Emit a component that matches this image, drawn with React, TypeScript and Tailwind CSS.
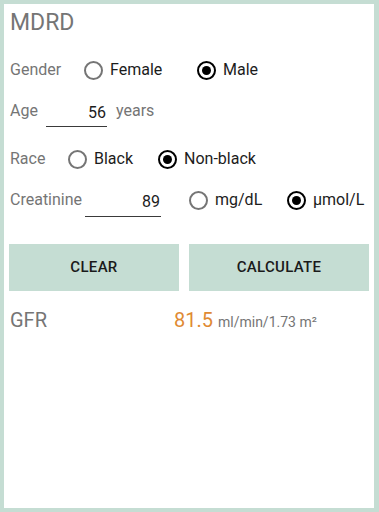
import React, { useState } from 'react';

const font = { fontFamily: 'Roboto, "Noto Sans", sans-serif' };

type RadioProps = {
  label: string;
  checked: boolean;
  onClick: () => void;
  className?: string;
};

// Android style radio button
const Radio: React.FC<RadioProps> = ({ label, checked, onClick, className = '' }) => (
  <button onClick={onClick} className={`flex items-center gap-[7px] ${className}`}>
    <span
      className={`w-[19px] h-[19px] rounded-full border-2 flex items-center justify-center ${
        checked ? 'border-black' : 'border-[#757575]'
      }`}
    >
      {checked && <span className="w-[9px] h-[9px] rounded-full bg-black" />}
    </span>
    <span className="text-[16px] text-[#1c1c1c]">{label}</span>
  </button>
);

const App: React.FC = () => {
  const [gender, setGender] = useState('male');
  const [race, setRace] = useState('nonblack');
  const [unit, setUnit] = useState('umol');
  const [age, setAge] = useState('56');
  const [creat, setCreat] = useState('89');

  return (
    <div className="w-[379px] h-[512px] bg-[#c5ddd3] pt-[4px] pl-[4px] pr-[5px] pb-[4px]" style={font}>
      <div className="bg-white h-full pl-[6px] pr-[5px]">
        {/* Title */}
        <div className="h-[38px] flex items-center text-[23px] text-[#757575]">MDRD</div>

        {/* Gender */}
        <div className="h-[40px] mt-[8px] flex items-center">
          <div className="w-[74px] text-[16px] text-[#757575]">Gender</div>
          <Radio label="Female" checked={gender === 'female'} onClick={() => setGender('female')} className="w-[113px]" />
          <Radio label="Male" checked={gender === 'male'} onClick={() => setGender('male')} />
        </div>

        {/* Age */}
        <div className="h-[40px] mt-[1px] flex items-center">
          <div className="w-[36px] text-[16px] text-[#757575]">Age</div>
          <input
            value={age}
            onChange={(e) => setAge(e.target.value)}
            className="w-[61px] h-[32px] pt-[4px] border-b border-[#3a3a3a] text-right pr-[1px] text-[16px] text-[#1c1c1c] outline-none"
          />
          <div className="ml-[9px] text-[16px] text-[#757575]">years</div>
        </div>

        {/* Race */}
        <div className="h-[40px] mt-[8px] flex items-center">
          <div className="w-[58px] text-[16px] text-[#757575]">Race</div>
          <Radio label="Black" checked={race === 'black'} onClick={() => setRace('black')} className="w-[90px]" />
          <Radio label="Non-black" checked={race === 'nonblack'} onClick={() => setRace('nonblack')} />
        </div>

        {/* Creatinine */}
        <div className="h-[40px] mt-[1px] flex items-center">
          <div className="w-[75px] text-[16px] text-[#757575]">Creatinine</div>
          <input
            value={creat}
            onChange={(e) => setCreat(e.target.value)}
            className="w-[76px] h-[34px] pt-[4px] border-b border-[#3a3a3a] text-right pr-[1px] text-[16px] text-[#1c1c1c] outline-none"
          />
          <Radio label="mg/dL" checked={unit === 'mg'} onClick={() => setUnit('mg')} className="ml-[28px] w-[98px]" />
          <Radio label="μmol/L" checked={unit === 'umol'} onClick={() => setUnit('umol')} />
        </div>

        {/* Buttons */}
        <div className="mt-[24px] flex gap-[10px] -ml-[1px]">
          <button className="w-[170px] h-[47px] bg-[#c5ddd3] text-[15px] font-medium text-[#1a1a1a] tracking-[0.3px]">
            CLEAR
          </button>
          <button className="w-[180px] h-[47px] bg-[#c5ddd3] text-[15px] font-medium text-[#1a1a1a] tracking-[0.3px]">
            CALCULATE
          </button>
        </div>

        {/* Result */}
        <div className="h-[40px] mt-[9px] flex items-center">
          <div className="w-[164px] text-[20px] text-[#757575]">GFR</div>
          <div className="flex items-baseline">
            <span className="text-[20px] text-[#df8a33]">81.5</span>
            <span className="ml-[5px] text-[14px] text-[#757575]">ml/min/1.73 m²</span>
          </div>
        </div>
      </div>
    </div>
  );
};

export default App;
